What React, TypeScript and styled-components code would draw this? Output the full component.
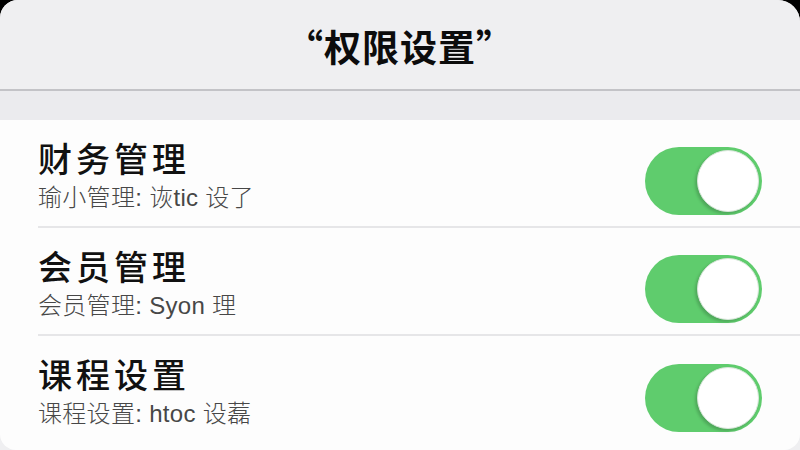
import React from "react";
import styled, { createGlobalStyle } from "styled-components";

const GlobalStyle = createGlobalStyle`
  html, body {
    margin: 0;
    padding: 0;
    background: #000;
  }
  body {
    font-family: "Liberation Sans", "Noto Sans CJK SC", sans-serif;
    -webkit-font-smoothing: antialiased;
  }
`;

const Screen = styled.div`
  width: 800px;
  height: 450px;
  overflow: hidden;
  background: #000;
`;

const Panel = styled.div`
  width: 800px;
  height: 450px;
  display: flex;
  flex-direction: column;
  background: #efeff1;
  border-top-left-radius: 18px;
  border-top-right-radius: 22px;
  overflow: hidden;
`;

const Header = styled.header`
  height: 89px;
  flex: none;
  display: flex;
  align-items: center;
  justify-content: center;
  background: #efeff1;
  border-bottom: 2px solid #c3c3c7;
`;

const Title = styled.h1`
  margin: 0;
  padding-top: 2px;
  font-family: "Noto Sans CJK SC", sans-serif;
  font-size: 37px;
  font-weight: 700;
  color: #0c0c0c;
  letter-spacing: 1px;
`;

const Band = styled.div`
  height: 29px;
  flex: none;
  background: #ebebee;
`;

const Card = styled.section`
  flex: 1;
  background: #fdfdfd;
  border-bottom-left-radius: 16px;
  border-bottom-right-radius: 16px;
  display: flex;
  flex-direction: column;
`;

const Row = styled.div`
  padding-left: 38px;
`;

const RowInner = styled.div<{ $last?: boolean }>`
  height: 108px;
  box-sizing: border-box;
  display: flex;
  align-items: center;
  padding: 20px 38px 17px 0;
  border-bottom: ${(p) => (p.$last ? "none" : "2px solid #e6e6e8")};
`;

const Texts = styled.div`
  flex: 1;
  display: flex;
  flex-direction: column;
  align-self: flex-start;
  gap: 2px;
`;

const Name = styled.div`
  font-family: "Liberation Sans", "Noto Sans CJK SC", sans-serif;
  font-size: 34px;
  line-height: 41px;
  font-weight: 500;
  color: #111;
  letter-spacing: 4px;
`;

const Detail = styled.div`
  font-family: "Liberation Sans", "Noto Sans CJK SC", sans-serif;
  font-size: 24px;
  line-height: 29px;
  font-weight: 300;
  color: #474747;
  letter-spacing: 0.3px;
`;

const Track = styled.div<{ $on: boolean }>`
  width: 117px;
  height: 68px;
  flex: none;
  margin-top: 12px;
  box-sizing: border-box;
  border-radius: 34px;
  background: ${(p) => (p.$on ? "#5fcc6d" : "#e5e5ea")};
  display: flex;
  align-items: center;
  justify-content: ${(p) => (p.$on ? "flex-end" : "flex-start")};
  padding: 0 3px;
`;

const Knob = styled.div`
  width: 62px;
  height: 62px;
  border-radius: 50%;
  background: #fff;
  box-sizing: border-box;
  border: 1.5px solid #d8e6da;
  box-shadow: -2px 2px 3px rgba(0, 0, 0, 0.18);
`;

type Perm = { name: string; detail: string; on: boolean };

const perms: Perm[] = [
  { name: "财务管理", detail: "瑜小管理: 诙tic 设了", on: true },
  { name: "会员管理", detail: "会员管理: Syon 理", on: true },
  { name: "课程设置", detail: "课程设置: htoc 设藞", on: true },
];

export default function App() {
  return (
    <Screen>
      <GlobalStyle />
      <Panel>
        <Header>
          <Title>“权限设置”</Title>
        </Header>
        <Band />
        <Card>
          {perms.map((p, i) => (
            <Row key={p.name}>
              <RowInner $last={i === perms.length - 1}>
                <Texts>
                  <Name>{p.name}</Name>
                  <Detail>{p.detail}</Detail>
                </Texts>
                <Track $on={p.on}>
                  <Knob />
                </Track>
              </RowInner>
            </Row>
          ))}
        </Card>
      </Panel>
    </Screen>
  );
}
